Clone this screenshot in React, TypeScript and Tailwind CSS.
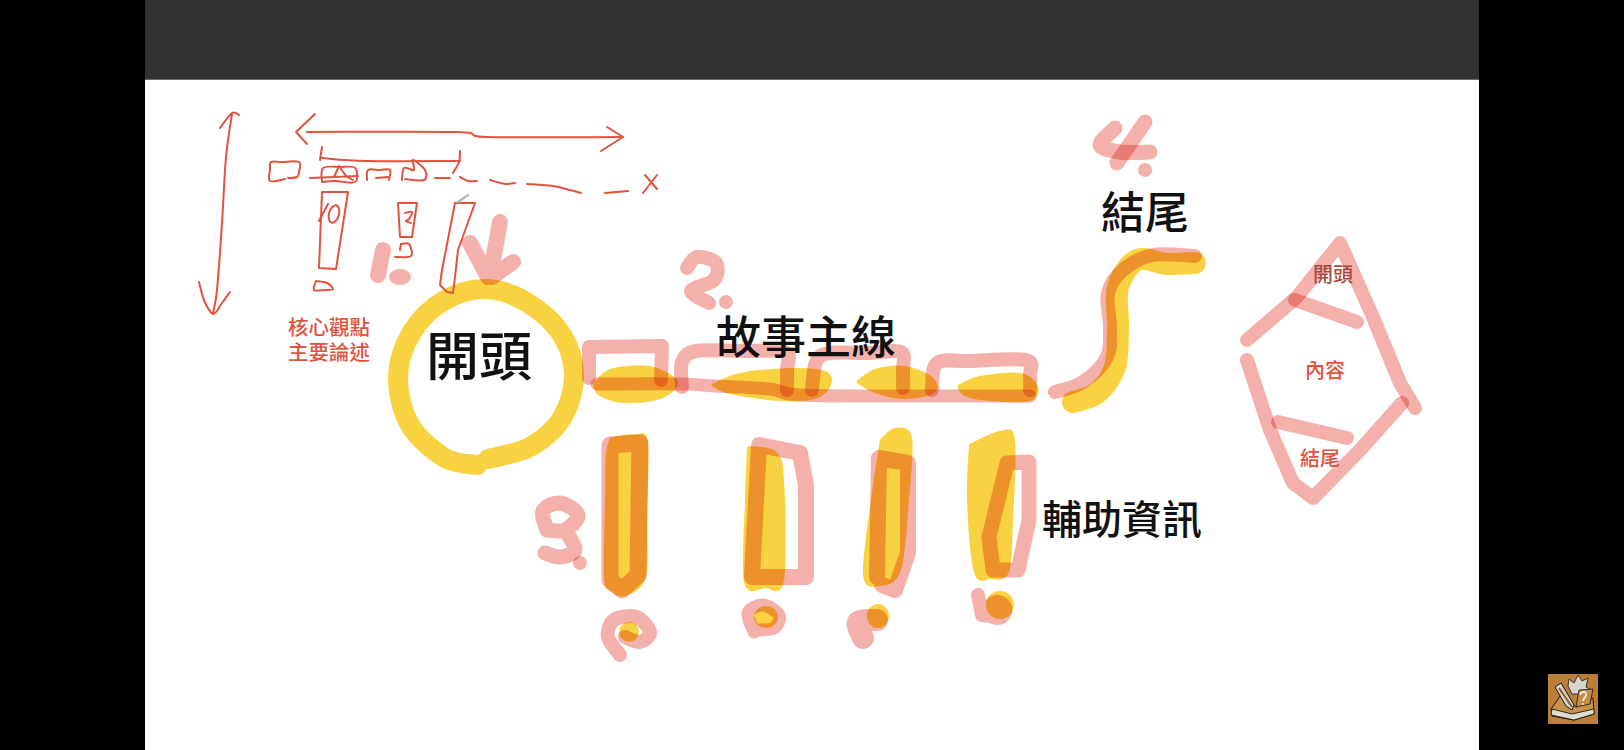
import React from "react";

type P = [number, number];

const PINK = "#F4B1AB";
const YELLOW = "#F8D240";
const RED = "#E0533F";

function line(pts: P[]) {
  return "M" + pts.map((p) => `${p[0]} ${p[1]}`).join(" L");
}

function curve(pts: P[]) {
  let d = `M${pts[0][0]} ${pts[0][1]}`;
  for (let i = 0; i < pts.length - 1; i++) {
    const a = pts[Math.max(i - 1, 0)];
    const b = pts[i];
    const c = pts[i + 1];
    const e = pts[Math.min(i + 2, pts.length - 1)];
    const c1x = b[0] + (c[0] - a[0]) / 6;
    const c1y = b[1] + (c[1] - a[1]) / 6;
    const c2x = c[0] - (e[0] - b[0]) / 6;
    const c2y = c[1] - (e[1] - b[1]) / 6;
    d += ` C${c1x} ${c1y} ${c2x} ${c2y} ${c[0]} ${c[1]}`;
  }
  return d;
}

function Pink({ d, w = 13 }: { d: string; w?: number }) {
  return <path d={d} fill="none" stroke={PINK} strokeWidth={w} strokeLinecap="round" strokeLinejoin="round" className="mix-blend-multiply" />;
}

function Red({ d, w = 2 }: { d: string; w?: number }) {
  return <path d={d} fill="none" stroke={RED} strokeWidth={w} strokeLinecap="round" strokeLinejoin="round" />;
}

function Yellow({ d }: { d: string }) {
  return <path d={d} fill={YELLOW} stroke={YELLOW} strokeWidth={2} strokeLinejoin="round" />;
}

function Drawing() {
  return (
    <svg viewBox="145 80 1334 670" className="absolute inset-0 h-full w-full blur-[0.5px]">
      {/* yellow highlights */}
      <path d={curve([[488, 459], [530, 447], [562, 418], [574, 376], [562, 335], [528, 303], [487, 289], [445, 300], [412, 332], [398, 377], [410, 425], [445, 458], [477, 465]])} fill="none" stroke={YELLOW} strokeWidth={20} strokeLinecap="round" />
      <Yellow d={curve([[594, 385], [610, 370], [650, 367], [677, 382], [660, 398], [625, 402], [600, 395], [594, 385]])} />
      <Yellow d={curve([[712, 385], [740, 374], [790, 369], [825, 372], [830, 385], [815, 398], [780, 400], [730, 393], [712, 385]])} />
      <Yellow d={curve([[857, 382], [875, 370], [905, 367], [932, 378], [934, 392], [905, 398], [875, 392], [857, 382]])} />
      <Yellow d={curve([[958, 386], [980, 377], [1020, 374], [1037, 386], [1030, 400], [990, 400], [965, 395], [958, 386]])} />
      <path d={curve([[1195, 263], [1167, 264], [1137, 260], [1118, 287], [1118, 327], [1115, 367], [1097, 393], [1073, 402]])} fill="none" stroke={YELLOW} strokeWidth={22} strokeLinecap="round" />
      <Yellow d={curve([[611, 438], [636, 435], [647, 443], [646, 520], [645, 577], [625, 595], [611, 590], [605, 577], [606, 500], [607, 453], [611, 438]])} />
      <Yellow d={curve([[748, 447], [775, 452], [783, 480], [783, 580], [765, 587], [745, 582], [746, 500], [748, 447]])} />
      <Yellow d={curve([[881, 440], [895, 429], [911, 438], [908, 500], [900, 570], [880, 585], [864, 575], [872, 500], [881, 440]])} />
      <Yellow d={curve([[970, 445], [1000, 432], [1014, 440], [1012, 520], [1008, 572], [990, 578], [975, 572], [968, 500], [970, 445]])} />
      <circle cx="629" cy="632" r="10" fill={YELLOW} />
      <ellipse cx="766" cy="617" rx="12" ry="11" fill={YELLOW} />
      <ellipse cx="878" cy="616" rx="11" ry="12" fill={YELLOW} />
      <circle cx="1000" cy="605" r="14" fill={YELLOW} />

      {/* pink marker strokes */}
      <Pink w={16} d={line([[383, 250], [378, 275]])} />
      <ellipse cx="400" cy="277" rx="11" ry="8" fill={PINK} className="mix-blend-multiply" />
      <Pink w={16} d="M500 222 L490 277 M470 243 L488 277 M513 262 L492 277" />

      <Pink w={14} d={curve([[687, 268], [697, 257], [716, 263], [714, 280], [691, 291], [709, 303]])} />
      <circle cx="726" cy="302" r="7" fill={PINK} className="mix-blend-multiply" />

      <Pink w={14} d={line([[589, 378], [589, 347], [662, 346], [661, 380]])} />
      <Pink w={13} d={curve([[597, 384], [680, 384], [715, 386], [770, 389], [800, 395], [900, 396], [1030, 396]])} />
      <Pink w={14} d={curve([[682, 387], [682, 362], [696, 351], [740, 351], [785, 352], [787, 370], [787, 390]])} />
      <Pink w={14} d={curve([[812, 390], [816, 362], [830, 353], [870, 353], [901, 352], [903, 370], [903, 388]])} />
      <Pink w={14} d={curve([[932, 390], [937, 363], [970, 361], [1026, 360], [1030, 375], [1030, 390]])} />

      <Pink w={14} d={curve([[1195, 256], [1153, 255], [1123, 270], [1108, 293], [1110, 327], [1107, 357], [1083, 382], [1055, 392]])} />

      <Pink w={15} d={curve([[1115, 128], [1100, 145], [1120, 152], [1150, 152]])} />
      <Pink w={15} d={line([[1145, 122], [1117, 163]])} />
      <circle cx="1145" cy="170" r="7" fill={PINK} className="mix-blend-multiply" />

      <Pink w={14} d={line([[1247, 340], [1297, 297], [1340, 243], [1373, 317], [1400, 383], [1415, 408]])} />
      <Pink w={14} d={line([[1402, 403], [1360, 450], [1313, 498], [1293, 483], [1270, 430], [1247, 360]])} />
      <Pink w={14} d={line([[1295, 300], [1357, 322]])} />
      <Pink w={14} d={line([[1278, 422], [1347, 438]])} />

      <Pink w={15} d={`${curve([[547, 530], [543, 511], [560, 503], [578, 515], [565, 530], [547, 530]])} ${curve([[565, 530], [575, 550], [560, 557], [545, 553]])}`} />
      <circle cx="580" cy="563" r="7" fill={PINK} className="mix-blend-multiply" />

      <Pink w={17} d={line([[610, 580], [610, 445], [640, 443], [638, 575], [622, 590], [610, 580]])} />
      <Pink w={16} d={line([[752, 577], [759, 445], [800, 453], [806, 485], [806, 577], [752, 577]])} />
      <Pink w={16} d={line([[877, 577], [879, 458], [908, 463], [908, 553], [895, 590], [882, 585]])} />
      <Pink w={15} d={line([[993, 570], [989, 537], [1007, 463], [1029, 462], [1029, 520], [1018, 570], [993, 570]])} />

      <Pink w={14} d={curve([[620, 655], [608, 637], [614, 620], [636, 617], [650, 632], [640, 642], [625, 637]])} />
      <Pink w={13} d={curve([[754, 632], [748, 613], [763, 605], [779, 615], [774, 628], [754, 630]])} />
      <Pink w={22} d={curve([[863, 638], [858, 622], [877, 620]])} />
      <path d="M978 595 L982 615 L992 616 A8 8 0 1 0 992 604 A8 8 0 0 0 992 616" fill={PINK} stroke={PINK} strokeWidth={14} strokeLinejoin="round" strokeLinecap="round" className="mix-blend-multiply" />

      {/* thin red pen */}
      <Red d={curve([[220, 128], [232, 113], [239, 115]])} />
      <Red d={curve([[232, 114], [226, 157], [222, 223], [217, 290], [213, 313]])} />
      <Red d={curve([[199, 282], [204, 300], [213, 314], [222, 303], [230, 292]])} />
      <Red d={line([[315, 114], [296, 132], [307, 144]])} />
      <Red d={curve([[307, 132], [457, 132], [487, 137], [623, 137]])} />
      <Red d={line([[607, 127], [623, 137], [601, 151]])} />
      <Red d={line([[322, 147], [320, 160]])} />
      <Red d={curve([[322, 158], [367, 161], [460, 161]])} />
      <Red d={curve([[460, 151], [459, 162], [453, 173]])} />
      <Red d={curve([[285, 179], [270, 181], [270, 170], [271, 162], [282, 162], [299, 162], [299, 172], [297, 177], [288, 178]])} />
      <Red d={line([[310, 178], [358, 176]])} />
      <Red d={curve([[322, 182], [323, 168], [340, 167], [355, 168], [355, 182], [335, 181], [322, 182]])} />
      <Red d={line([[334, 177], [339, 166], [346, 176], [353, 180]])} />
      <Red d={curve([[367, 180], [368, 170], [380, 170], [390, 170], [389, 180]])} />
      <Red d={line([[376, 178], [388, 177]])} />
      <Red d={curve([[402, 180], [404, 168], [414, 170], [413, 160], [425, 170], [424, 180], [405, 179]])} />
      <Red d={line([[435, 178], [450, 178]])} />
      <Red d={curve([[460, 177], [468, 181], [477, 181]])} />
      <Red d={curve([[490, 180], [505, 184], [515, 183]])} />
      <Red d={curve([[527, 184], [553, 186], [570, 190], [581, 193]])} />
      <Red d={line([[605, 193], [628, 191]])} />
      <Red d={line([[645, 175], [657, 189]])} />
      <Red d={line([[657, 175], [643, 193]])} />
      <Red d={line([[322, 192], [348, 192], [336, 269], [319, 268], [322, 192]])} />
      <Red d={line([[319, 221], [328, 204]])} />
      <ellipse cx="334" cy="214" rx="5" ry="9" fill="none" stroke={RED} strokeWidth={2} transform="rotate(15 334 214)" />
      <Red d={curve([[316, 281], [314, 290], [325, 290], [333, 289], [327, 283], [316, 281]])} />
      <Red d={line([[398, 203], [417, 203], [412, 237], [400, 237], [398, 203]])} />
      <Red d={curve([[405, 213], [412, 212], [409, 219], [406, 221], [411, 223]])} />
      <Red d={curve([[401, 244], [409, 244], [411, 256], [395, 257]])} />
      <Red d={line([[401, 244], [400, 250]])} />
      <Red d={line([[455, 203], [475, 203], [458, 250], [455, 277], [453, 293], [447, 292], [440, 285], [442, 270], [455, 203]])} />
      <path d="M458 202 L468 195" stroke="#b9b9b9" strokeWidth={2.5} strokeLinecap="round" />
    </svg>
  );
}

function Logo() {
  return (
    <svg viewBox="0 0 50 50" className="absolute bottom-[26px] right-[26px] h-[50px] w-[50px]">
      <rect width="50" height="50" fill="#BC7F3A" />
      <path d="M20 12 L21 5 L26 9 L30 1 L34 7 L40 4 L38 13 L45 17 L36 20 L24 20 Z" fill="#D9D5CC" stroke="#1b1410" strokeWidth="0.8" />
      <path d="M3 35 L15 18 L24 30 L28 33 L45 24 L46 40 L26 46 L4 42 Z" fill="#C79149" stroke="#1b1410" strokeWidth="1" />
      <path d="M4 35 L24 40 L46 35 L46 40 L26 46 L3 41 Z" fill="#E1DCD0" stroke="#1b1410" strokeWidth="0.9" />
      <path d="M7 13 L13 9 L26 31 L24 36 L18 32 Z" fill="#D8D3C8" stroke="#1b1410" strokeWidth="1" />
      <path d="M11 14 L24 33" stroke="#8a5a2c" strokeWidth="2" />
      <path d="M28 33 L31 16 L45 15 L42 30 Z" fill="#C48C44" stroke="#1b1410" strokeWidth="0.8" />
      <path d="M32 21 C33 17 39 17 38 21 C38 24 35 24 35 27" fill="none" stroke="#EDE9DE" strokeWidth="1.8" />
      <circle cx="35" cy="30" r="1" fill="#EDE9DE" />
    </svg>
  );
}

const cjk = "font-['Noto_Sans_CJK_TC','Noto_Sans_CJK_SC',sans-serif]";

export default function App() {
  return (
    <div className={`relative flex h-[750px] w-[1624px] justify-center overflow-hidden bg-black ${cjk}`}>
      <div className="flex w-[1334px] flex-col">
        <div className="h-[80px] shrink-0 border-b border-[#6b6b6b] bg-[#323232]" />
        <div className="relative flex-1 bg-white">
          <Drawing />
          <span className="absolute left-[281px] top-[247px] whitespace-nowrap text-[53px] font-medium leading-none text-[#111]">開頭</span>
          <span className="absolute left-[571px] top-[232px] whitespace-nowrap text-[45px] font-medium leading-none text-[#111]">故事主線</span>
          <span className="absolute left-[956px] top-[108px] whitespace-nowrap text-[44px] font-medium leading-none text-[#111]">結尾</span>
          <span className="absolute left-[897px] top-[417px] whitespace-nowrap text-[40px] font-medium leading-none text-[#111]">輔助資訊</span>
          <div className="absolute left-[143px] top-[234px] text-[20.5px] font-medium leading-[25px] text-[#E0533F]">
            <div>核心觀點</div>
            <div>主要論述</div>
          </div>
          <span className="absolute left-[1168px] top-[184px] text-[20px] font-medium leading-none text-[#A84A3E]">開頭</span>
          <span className="absolute left-[1160px] top-[280px] text-[20px] font-medium leading-none text-[#E0533F]">內容</span>
          <span className="absolute left-[1155px] top-[368px] text-[20px] font-medium leading-none text-[#E0533F]">結尾</span>
        </div>
      </div>
      <Logo />
    </div>
  );
}
